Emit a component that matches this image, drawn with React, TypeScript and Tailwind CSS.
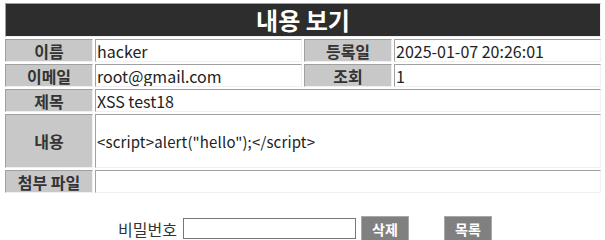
import React from 'react';

const font = "font-['Malgun_Gothic','Noto_Sans_CJK_KR','Noto_Sans',sans-serif]";

const cell = 'border border-t-[#a0a0a0] border-l-[#a0a0a0] border-b-[#f0f0f0] border-r-[#f0f0f0]';

const Label = ({ children, tall }: { children: React.ReactNode; tall?: boolean }) => (
  <div
    className={`${cell} flex items-center justify-center overflow-hidden bg-[#c8c8c8] text-[16px] font-bold leading-none text-[#333] ${
      tall ? 'h-[54px]' : 'h-[23px]'
    }`}
  >
    {children}
  </div>
);

const Value = ({ children, tall, span }: { children?: React.ReactNode; tall?: boolean; span?: boolean }) => (
  <div
    className={`${cell} flex items-center overflow-hidden bg-white pl-px text-[16px] leading-none text-[#222] ${
      tall ? 'h-[54px]' : 'h-[23px]'
    } ${span ? 'col-span-3' : ''}`}
  >
    {children}
  </div>
);

export default function App() {
  return (
    <div className={`${font} h-[240px] w-[605px] overflow-hidden bg-white`}>
      <div className="ml-[5px] pt-[3px] w-[596px] flex flex-col gap-[2px]">
        <div className={`${cell} flex h-[34px] items-center justify-center bg-[#2d2d2d] text-[24px] font-bold leading-none text-white`}>
          내용 보기
        </div>
        <div className="grid grid-cols-[88px_207px_88px_207px] gap-[2px]">
          <Label>이름</Label>
          <Value>hacker</Value>
          <Label>등록일</Label>
          <Value>2025-01-07 20:26:01</Value>

          <Label>이메일</Label>
          <Value>root@gmail.com</Value>
          <Label>조회</Label>
          <Value>1</Value>

          <Label>제목</Label>
          <Value span>XSS test18</Value>

          <Label tall>내용</Label>
          <Value tall span>
            <span className="text-[15px] tracking-[0.15px]">{'<script>alert("hello");</script>'}</span>
          </Value>

          <Label>첨부 파일</Label>
          <Value span />
        </div>
      </div>

      {/* password + buttons */}
      <div className="mt-[23px] flex h-[25px] items-center justify-center pl-[5px]">
        <span className="mr-[6px] text-[16px] leading-none text-[#333]">비밀번호</span>
        <input
          type="password"
          className="h-[21px] w-[173px] border border-[#767676] bg-white outline-none"
        />
        <button className="ml-[5px] h-[25px] w-[48px] border border-[#a8a8a8] bg-[#808080] text-[14px] font-bold leading-none text-white">
          삭제
        </button>
        <button className="ml-[35px] h-[25px] w-[48px] border border-[#a8a8a8] bg-[#808080] text-[14px] font-bold leading-none text-white">
          목록
        </button>
      </div>
    </div>
  );
}
